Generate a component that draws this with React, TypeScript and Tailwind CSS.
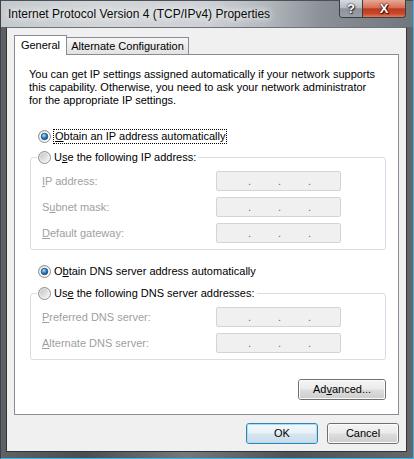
import React from "react";

const disabledLabel = "text-[#a0a0a0]";

function Radio({ checked }: { checked?: boolean }) {
  return (
    <svg width="13" height="13" viewBox="0 0 13 13" className="shrink-0">
      <defs>
        <linearGradient id="radioRing" x1="0" y1="0" x2="1" y2="1">
          <stop offset="0" stopColor="#d6d6d6" />
          <stop offset="1" stopColor="#ffffff" />
        </linearGradient>
        <linearGradient id="radioInner" x1="0" y1="0" x2="1" y2="1">
          <stop offset="0" stopColor="#c6c6c6" />
          <stop offset="1" stopColor="#f4f4f4" />
        </linearGradient>
        <radialGradient id="radioDot" cx="0.4" cy="0.35" r="0.7">
          <stop offset="0" stopColor="#bfe6fb" />
          <stop offset="0.45" stopColor="#3a8fd0" />
          <stop offset="1" stopColor="#0d3f72" />
        </radialGradient>
      </defs>
      <circle cx="6.5" cy="6.5" r="6" fill="url(#radioRing)" stroke="#8e8f8f" strokeWidth="1" />
      {checked ? (
        <>
          <circle cx="6.5" cy="6.5" r="4.6" fill="#ffffff" />
          <circle cx="6.5" cy="6.5" r="3.3" fill="url(#radioDot)" stroke="#1b4f80" strokeWidth="0.8" />
        </>
      ) : (
        <circle cx="6.5" cy="6.5" r="4.2" fill="url(#radioInner)" />
      )}
    </svg>
  );
}

function IpBox() {
  return (
    <div className="w-[125px] h-[20px] shrink-0 rounded-[2px] border border-[#d4d4d4] bg-[#f0f0f0] flex items-center pl-[31px] gap-[27px] leading-none text-[#6a6a6a]">
      <span className="w-[3px]">.</span>
      <span className="w-[3px]">.</span>
      <span className="w-[3px]">.</span>
    </div>
  );
}

function FieldRow({ label }: { label: React.ReactNode }) {
  return (
    <div className="flex items-center h-[20px]">
      <div className={`w-[174px] shrink-0 ${disabledLabel} leading-[15px]`}>{label}</div>
      <IpBox />
    </div>
  );
}

function Button({
  children,
  width,
  isDefault,
}: {
  children: React.ReactNode;
  width: string;
  isDefault?: boolean;
}) {
  return (
    <div
      className={`${width} h-[21px] shrink-0 rounded-[3px] border ${
        isDefault ? "border-[#3c7fb1]" : "border-[#707070]"
      }`}
    >
      <div
        className={`h-full w-full rounded-[2px] flex items-center justify-center leading-none ${
          isDefault
            ? "border border-[#9fe2fa] bg-[linear-gradient(180deg,#f2f8fb_0%,#e8f1f6_48%,#d6e6ef_52%,#cadde8_100%)]"
            : "border border-[#fbfbfb] bg-[linear-gradient(180deg,#f3f3f3_0%,#ebebeb_48%,#dddddd_52%,#cfcfcf_100%)]"
        }`}
      >
        {children}
      </div>
    </div>
  );
}

export default function App() {
  return (
    <div className="w-[414px] h-[459px] overflow-hidden flex flex-col [font-family:'Liberation_Sans',Arial,sans-serif] text-[11px] text-black bg-[linear-gradient(90deg,#5e6266_0%,#4a4e52_20%,#74787c_45%,#4f5357_70%,#63676b_100%)] border-l border-l-[#3e4246] border-r border-r-[#3cb8e6] border-b border-b-[#3cb8e6]">
      {/* title bar */}
      <div className="h-[27px] shrink-0 -ml-px flex pl-[8px] pr-[7px] border-t border-t-[#4b5055] bg-[linear-gradient(90deg,#c4c9cd_0%,#d2d6d9_25%,#cdd1d5_50%,#b3b9be_64%,#8a9096_78%,#70767c_100%)]">
        <div className="pt-[6px] leading-[15px] text-[12px] whitespace-nowrap text-[#0b0b0b] [text-shadow:0_0_6px_#ffffff,0_0_10px_#ffffff]">
          Internet Protocol Version 4 (TCP/IPv4) Properties
        </div>
        <div className="ml-auto -mt-px flex h-[18px] rounded-b-[4px] border border-t-0 border-[#3a3e42] overflow-hidden">
          <div className="w-[23px] h-full flex items-center justify-center border-r border-[#3a3e42] bg-[linear-gradient(180deg,#d6dbdf_0%,#b5bcc2_45%,#8d959c_52%,#98a0a6_100%)] text-white font-bold text-[13px] leading-none [text-shadow:0_0_1px_#222,0_0_2px_#222,1px_1px_1px_#333]">
            ?
          </div>
          <div className="w-[42px] h-full flex items-center justify-center bg-[linear-gradient(180deg,#e9a897_0%,#d66f55_45%,#c03a1d_52%,#c8482a_80%,#dd7d5c_100%)] text-white font-bold text-[13px] leading-none [text-shadow:0_0_1px_#2a0a00,0_0_2px_#2a0a00,1px_1px_1px_#400]">
            X
          </div>
        </div>
      </div>

      {/* client area */}
      <div className="flex-1 ml-[5px] mr-[6px] mb-[6px] border border-[#333333] border-t-[#6f7378] bg-[#f0f0f0] px-[7px] pt-[7px] flex flex-col">
        {/* tabs */}
        <div className="flex items-end h-[19px] whitespace-nowrap">
          <div className="relative z-10 -mb-px w-[53px] h-[20px] border border-b-0 border-[#898c95] bg-white flex items-center justify-center leading-none">
            General
          </div>
          <div className="w-[122px] h-[17px] border border-b-0 border-l-0 border-[#898c95] bg-[linear-gradient(180deg,#f6f6f6_0%,#ececec_50%,#e2e2e2_100%)] flex items-center justify-center leading-none">
            Alternate Configuration
          </div>
        </div>

        {/* tab panel */}
        <div className="border border-[#898c95] bg-white flex flex-col">
          <p className="ml-[14px] mt-[13px] leading-[13px] whitespace-nowrap">
            You can get IP settings assigned automatically if your network supports
            <br />
            this capability. Otherwise, you need to ask your network administrator
            <br />
            for the appropriate IP settings.
          </p>

          <div className="mt-[22px] ml-[23px] h-[15px] flex items-center">
            <Radio checked />
            <span className="ml-[2px] h-[15px] px-px border border-dotted border-black flex items-center leading-none">
              <span>
                <u>O</u>btain an IP address automatically
              </span>
            </span>
          </div>

          <fieldset className="mt-[6px] ml-[15px] w-[356px] border border-[#d5dfe5] rounded-[3px] pb-[6px]">
            <legend className="ml-[6px] pl-px pr-[2px] h-[15px]">
              <span className="flex items-center h-[15px] leading-none">
                <Radio />
                <span className="ml-[3px]">
                  U<u>s</u>e the following IP address:
                </span>
              </span>
            </legend>
            <div className="pt-[6px] pl-[11px] flex flex-col gap-[6px]">
              <FieldRow label={<><u>I</u>P address:</>} />
              <FieldRow label={<>S<u>u</u>bnet mask:</>} />
              <FieldRow label={<><u>D</u>efault gateway:</>} />
            </div>
          </fieldset>

          <div className="mt-[14px] ml-[23px] h-[15px] flex items-center">
            <Radio checked />
            <span className="ml-[3px] leading-none">
              O<u>b</u>tain DNS server address automatically
            </span>
          </div>

          <fieldset className="mt-[7px] ml-[15px] w-[356px] border border-[#d5dfe5] rounded-[3px] pb-[6px]">
            <legend className="ml-[6px] pl-px pr-[2px] h-[15px]">
              <span className="flex items-center h-[15px] leading-none">
                <Radio />
                <span className="ml-[3px]">
                  Us<u>e</u> the following DNS server addresses:
                </span>
              </span>
            </legend>
            <div className="pt-[6px] pl-[11px] flex flex-col gap-[6px]">
              <FieldRow label={<><u>P</u>referred DNS server:</>} />
              <FieldRow label={<><u>A</u>lternate DNS server:</>} />
            </div>
          </fieldset>

          <div className="self-end mt-[19px] mr-[12px] mb-[14px]">
            <Button width="w-[88px]">
              <span>
                Ad<u>v</u>anced...
              </span>
            </Button>
          </div>
        </div>

        {/* dialog buttons */}
        <div className="mt-[8px] flex justify-end gap-[9px]">
          <Button width="w-[72px]" isDefault>
            OK
          </Button>
          <Button width="w-[72px]">Cancel</Button>
        </div>
      </div>
    </div>
  );
}
